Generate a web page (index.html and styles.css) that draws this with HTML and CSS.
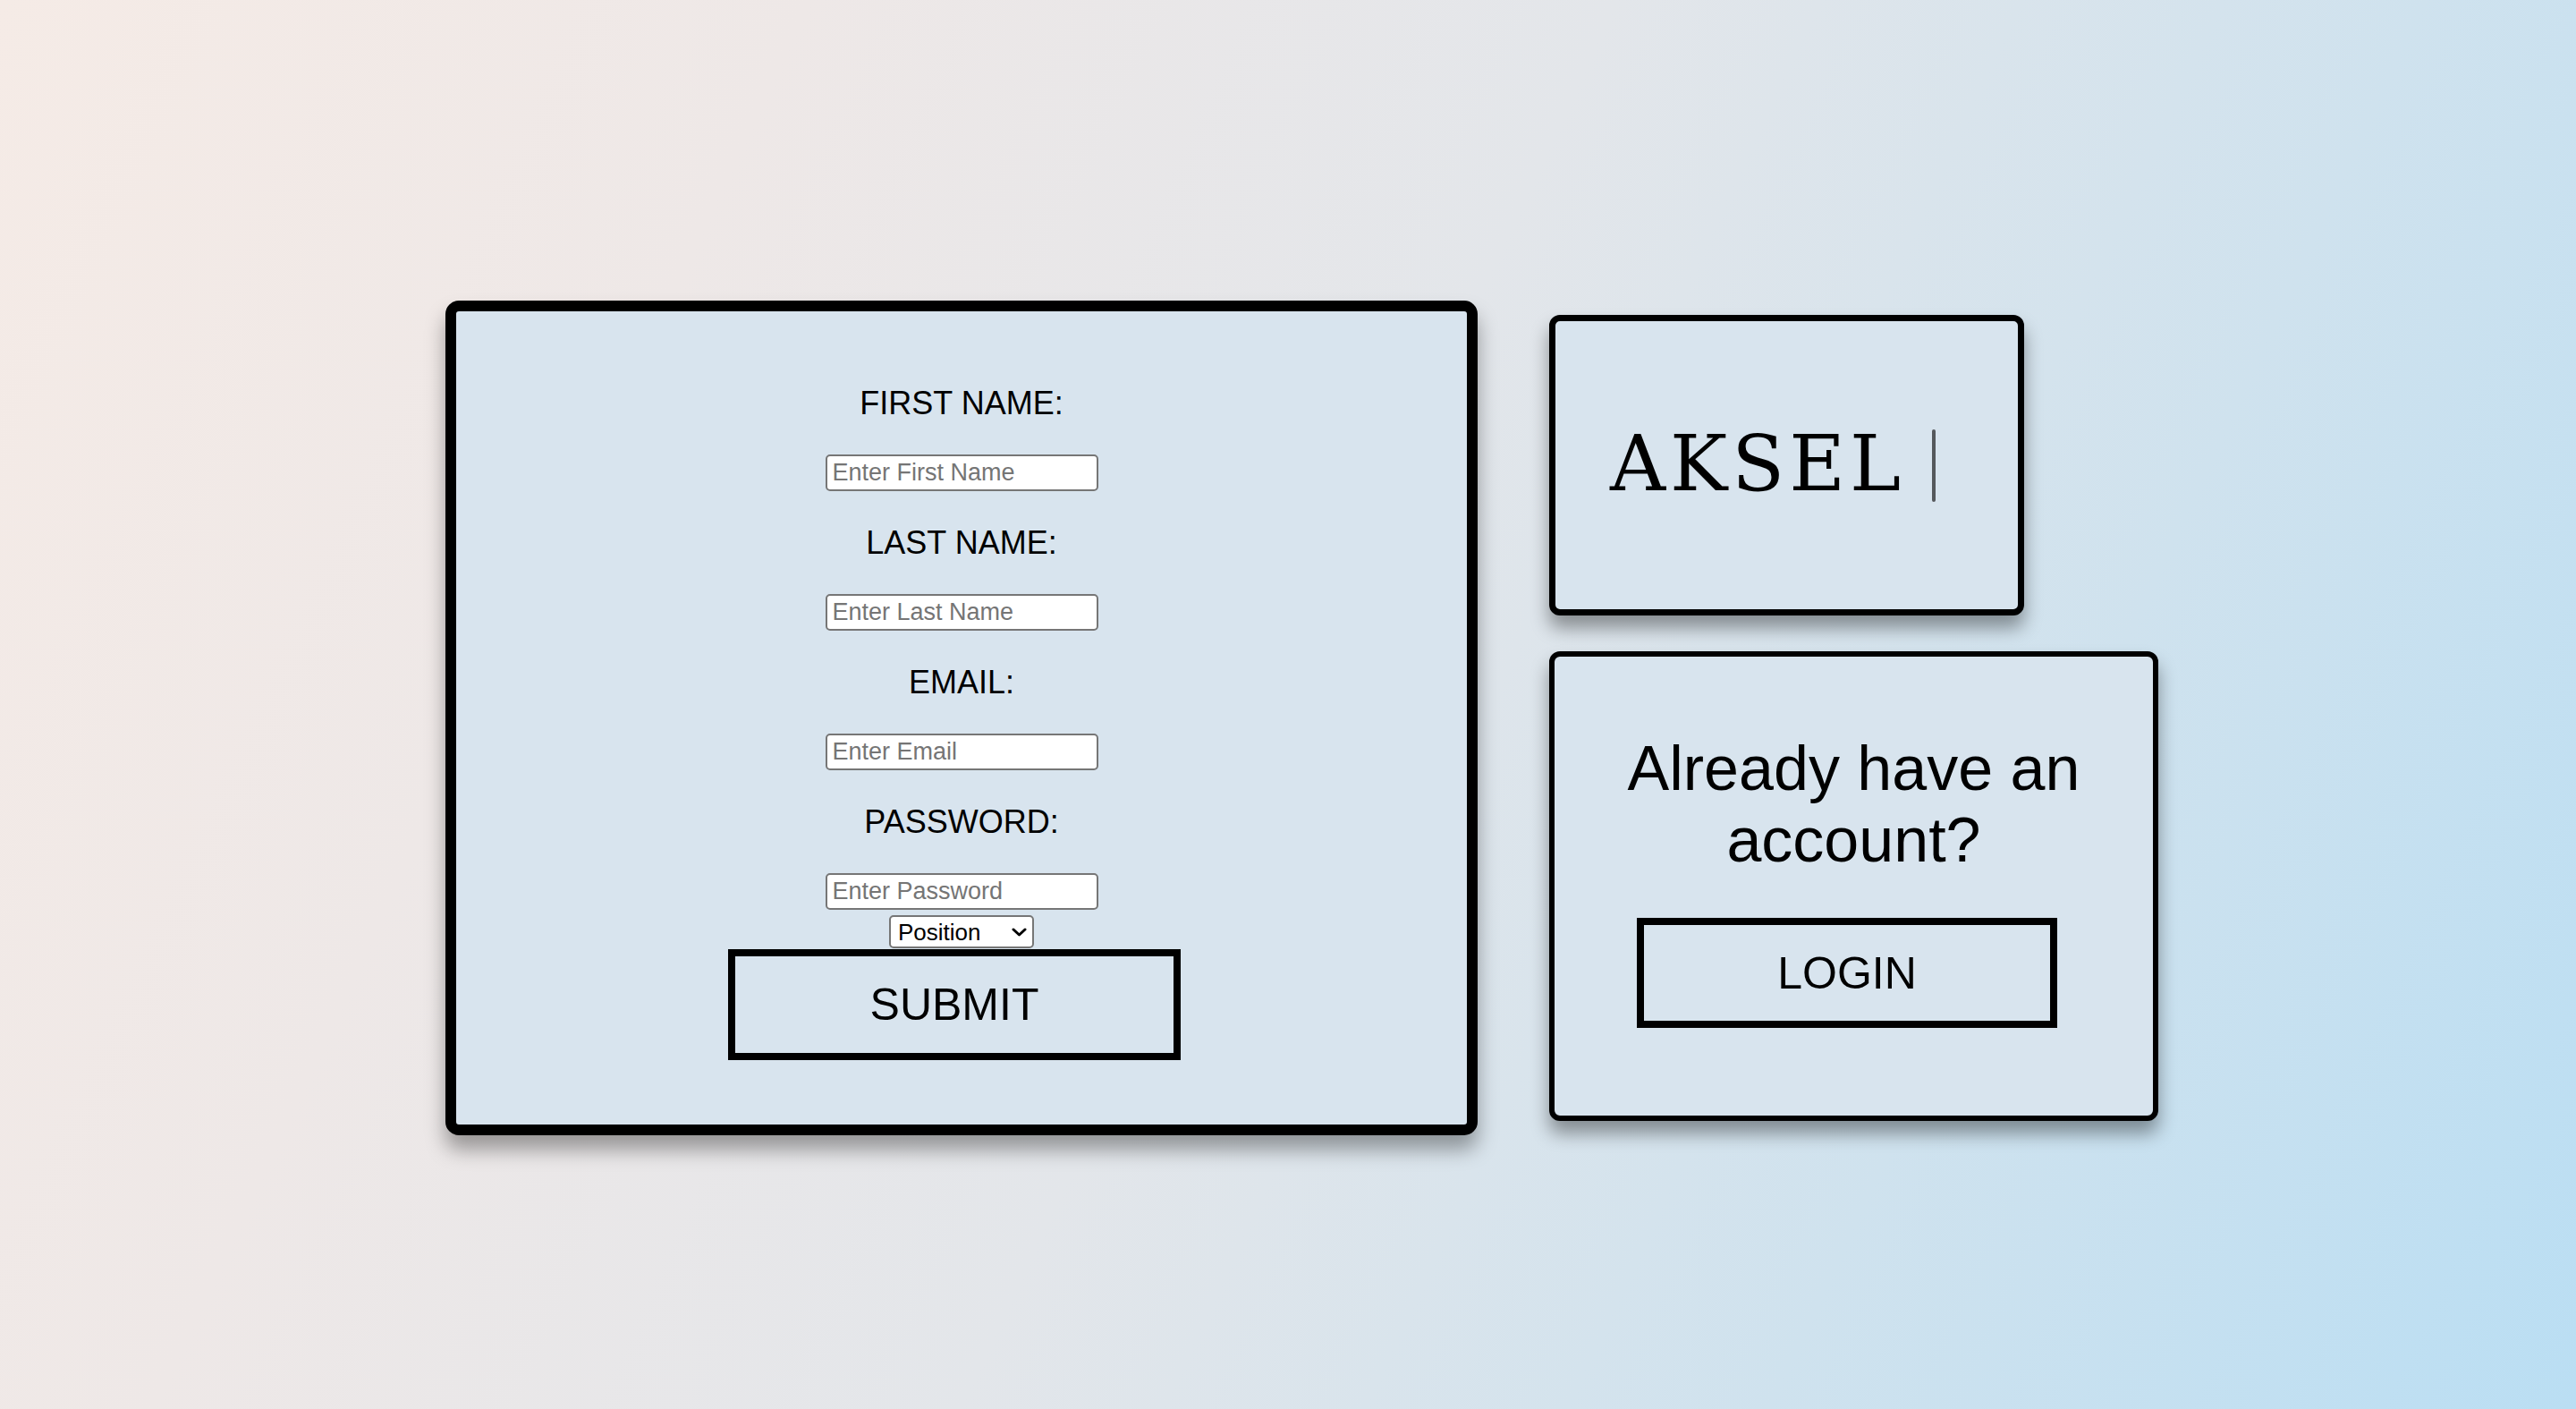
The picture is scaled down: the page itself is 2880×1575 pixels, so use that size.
FILE: index.html
```html
<!DOCTYPE html>
<html lang="en">
<head>
<meta charset="utf-8">
<title>Sign up</title>
<link rel="stylesheet" href="styles.css">
</head>
<body>
<main class="page">
  <form class="card signup">
    <div class="field">
      <label class="field-label" for="first">FIRST NAME:</label>
      <input class="text-input" id="first" type="text" placeholder="Enter First Name">
    </div>
    <div class="field">
      <label class="field-label" for="last">LAST NAME:</label>
      <input class="text-input" id="last" type="text" placeholder="Enter Last Name">
    </div>
    <div class="field">
      <label class="field-label" for="email">EMAIL:</label>
      <input class="text-input" id="email" type="text" placeholder="Enter Email">
    </div>
    <div class="field">
      <label class="field-label" for="pass">PASSWORD:</label>
      <input class="text-input" id="pass" type="password" placeholder="Enter Password">
    </div>
    <div class="select-wrap">
      <select class="position-select"><option>Position</option></select>
      <svg class="chevron" viewBox="0 0 17 10" aria-hidden="true"><polyline points="2,2 8.5,8 15,2" fill="none" stroke="#000" stroke-width="3" stroke-linecap="round" stroke-linejoin="round"/></svg>
    </div>
    <button class="submit-btn" type="button">SUBMIT</button>
  </form>
  <div class="side">
    <div class="card brand">
      <span class="brand-text">AKSEL</span><span class="cursor"></span>
    </div>
    <div class="card login">
      <h2 class="login-title">Already have an account?</h2>
      <button class="login-btn" type="button">LOGIN</button>
    </div>
  </div>
</main>
</body>
</html>
```
FILE: styles.css
```css
html, body {
  margin: 0;
  height: 100%;
}
body {
  background: linear-gradient(115deg, #f5ebe6 0%, #eee8e7 25%, #e3e6ea 50%, #cfe2ee 75%, #badef3 100%);
  font-family: "Liberation Sans", Arial, sans-serif;
  color: #000;
}
.page {
  min-height: 100vh;
  box-sizing: border-box;
  display: flex;
  align-items: center;
  justify-content: center;
  gap: 80px;
  padding: 30px 0 0 31px;
}
.card {
  box-sizing: border-box;
  background: #d8e4ee;
  border: 0 solid #000;
}
.signup {
  width: 1154px;
  border-width: 12px;
  border-radius: 15px;
  box-shadow: 0 16px 22px rgba(0, 0, 0, 0.35);
  padding: 83px 0 72px;
  display: flex;
  flex-direction: column;
  align-items: center;
}
.field {
  display: flex;
  flex-direction: column;
  align-items: center;
}
.field + .field {
  margin-top: 38px;
}
.field-label {
  font-size: 36px;
  line-height: 40px;
  margin-bottom: 37px;
}
.text-input {
  width: 305px;
  height: 41px;
  box-sizing: border-box;
  border: 2px solid #767676;
  border-radius: 5px;
  background: #fff;
  font-family: "Liberation Sans", Arial, sans-serif;
  font-size: 27px;
  padding: 0 6px;
  color: #000;
  margin: 0;
}
.text-input::placeholder {
  color: #757575;
}
.select-wrap {
  position: relative;
  margin-top: 6px;
  display: flex;
}
.position-select {
  appearance: none;
  -webkit-appearance: none;
  width: 162px;
  height: 37px;
  box-sizing: border-box;
  border: 2px solid #767676;
  border-radius: 5px;
  background: #fff;
  font-family: "Liberation Sans", Arial, sans-serif;
  font-size: 26px;
  padding: 0 0 0 8px;
  color: #000;
  margin: 0;
}
.chevron {
  position: absolute;
  right: 8px;
  top: 14px;
  width: 17px;
  height: 10px;
  pointer-events: none;
}
.submit-btn {
  margin: 1px 16px 0 0;
  width: 506px;
  height: 124px;
  box-sizing: border-box;
  border: 8px solid #000;
  background: transparent;
  font-family: "Liberation Sans", Arial, sans-serif;
  font-size: 50px;
  color: #000;
  padding: 0;
}
.side {
  display: flex;
  flex-direction: column;
  align-items: flex-start;
  gap: 40px;
}
.brand {
  width: 531px;
  height: 336px;
  border-width: 7px;
  border-radius: 12px;
  box-shadow: 0 14px 20px rgba(0, 0, 0, 0.38);
  display: flex;
  align-items: center;
  padding: 0 0 0 61px;
}
.brand-text {
  font-family: "DejaVu Serif", "Liberation Serif", serif;
  font-size: 86px;
  line-height: 1;
  letter-spacing: 5px;
  margin-top: -4px;
}
.cursor {
  width: 4px;
  height: 81px;
  border-radius: 2px;
  background: #55585c;
  margin-left: 30px;
}
.login {
  width: 681px;
  border-width: 6px;
  border-radius: 12px;
  box-shadow: 0 14px 20px rgba(0, 0, 0, 0.38);
  padding: 85px 0 98px;
  display: flex;
  flex-direction: column;
  align-items: center;
}
.login-title {
  margin: 0;
  padding: 0 60px;
  font-size: 70px;
  font-weight: normal;
  line-height: 80px;
  text-align: center;
}
.login-btn {
  margin: 47px 15px 0 0;
  width: 470px;
  height: 123px;
  box-sizing: border-box;
  border: 8px solid #000;
  background: transparent;
  font-family: "Liberation Sans", Arial, sans-serif;
  font-size: 50px;
  color: #000;
  padding: 0;
}
```
